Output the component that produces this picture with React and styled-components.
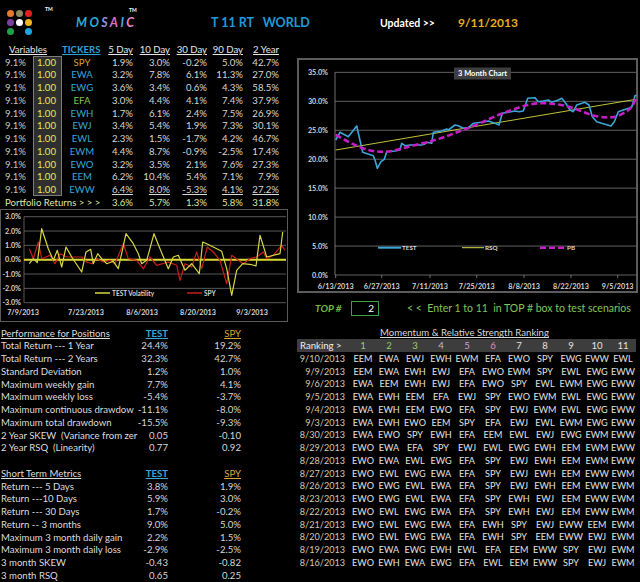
import React from 'react';
import styled, { createGlobalStyle } from 'styled-components';

const GlobalStyle = createGlobalStyle`
  html, body { margin: 0; padding: 0; background: #000; }
  body { font-family: Lato, "Liberation Sans", sans-serif; color: #d8d8d8; }
`;

const BLUE = '#3aa6d6';
const GOLD = '#dba632';
const GREEN = '#86c45a';

const variables = [
  ['SPY', '1.9%', '3.0%', '-0.2%', '5.0%', '42.7%'],
  ['EWA', '3.2%', '7.8%', '6.1%', '11.3%', '27.0%'],
  ['EWG', '3.6%', '3.4%', '0.6%', '4.3%', '58.5%'],
  ['EFA', '3.0%', '4.4%', '4.1%', '7.4%', '37.9%'],
  ['EWH', '1.7%', '6.1%', '2.4%', '7.5%', '26.9%'],
  ['EWJ', '3.4%', '5.4%', '1.9%', '7.3%', '30.1%'],
  ['EWL', '2.3%', '1.5%', '-1.7%', '4.2%', '46.7%'],
  ['EWM', '4.4%', '8.7%', '-0.9%', '-2.5%', '17.4%'],
  ['EWO', '3.2%', '3.5%', '2.1%', '7.6%', '27.3%'],
  ['EEM', '6.2%', '10.4%', '5.4%', '7.1%', '7.9%'],
  ['EWW', '6.4%', '8.0%', '-5.3%', '4.1%', '27.2%'],
];

const performance = [
  ['Total Return --- 1 Year', '24.4%', '19.2%'],
  ['Total Return --- 2 Years', '32.3%', '42.7%'],
  ['Standard Deviation', '1.2%', '1.0%'],
  ['Maximum weekly gain', '7.7%', '4.1%'],
  ['Maximum weekly loss', '-5.4%', '-3.7%'],
  ['Maximum continuous drawdow', '-11.1%', '-8.0%'],
  ['Maximum total drawdown', '-15.5%', '-9.3%'],
  ['2 Year SKEW  (Variance from zer', '0.05', '-0.10'],
  ['2 Year RSQ  (Linearity)', '0.77', '0.92'],
];

const shortTerm = [
  ['Return --- 5 Days', '3.8%', '1.9%'],
  ['Return ---10 Days', '5.9%', '3.0%'],
  ['Return --- 30 Days', '1.7%', '-0.2%'],
  ['Return -- 3 months', '9.0%', '5.0%'],
  ['Maximum 3 month daily gain', '2.2%', '1.5%'],
  ['Maximum 3 month daily loss', '-2.9%', '-2.5%'],
  ['3 month SKEW', '-0.43', '-0.82'],
  ['3 month RSQ', '0.65', '0.25'],
];

const ranking = `9/10/2013 EEM EWA EWJ EWH EWM EFA EWO SPY EWG EWW EWL
9/9/2013 EEM EWA EWH EWJ EFA EWO EWM SPY EWL EWG EWW
9/6/2013 EWA EEM EWH EWJ EFA EWO SPY EWL EWM EWG EWW
9/5/2013 EWA EWH EEM EFA EWJ SPY EWO EWM EWL EWG EWW
9/4/2013 EWA EWH EEM EWO EFA SPY EWJ EWM EWL EWG EWW
9/3/2013 EWA EWH EWO EEM SPY EFA EWJ EWL EWM EWG EWW
8/30/2013 EWA EWO SPY EWH EFA EEM EWL EWJ EWG EWM EWW
8/29/2013 EWO EWA EFA SPY EWJ EWL EWG EWH EEM EWM EWW
8/28/2013 EWO EWA EWL EWG EFA SPY EWJ EWH EEM EWM EWW
8/27/2013 EWO EWL EWG EWA EFA SPY EWJ EWH EEM EWW EWM
8/26/2013 EWO EWG EWL EWA EFA SPY EWJ EWH EEM EWW EWM
8/23/2013 EWO EWG EWL EWA EFA SPY EWH EWJ EEM EWW EWM
8/22/2013 EWO EWL EWG EWA EFA SPY EWH EWJ EEM EWW EWM
8/21/2013 EWO EWL EWG EWA EFA EWH SPY EWJ EWW EEM EWM
8/20/2013 EWO EWL EWG EWA EFA EWH SPY EEM EWW EWJ EWM
8/19/2013 EWO EWA EWG EWH EWL EFA EEM EWW SPY EWJ EWM
8/16/2013 EWO EWH EWA EWG EFA EWL EEM EWW SPY EWJ EWM`
  .split('\n')
  .map((l) => l.split(' '));

const rankColors = ['#8fd060', '#8fd060', '#9ccf6c', '#c4b4dc', '#d49ccc', '#e48cbc'];

const tickerColor = (t) => (t === 'SPY' ? GOLD : t === 'EFA' ? GREEN : BLUE);

// chart points are read off the screenshot at 3x, mapped back here
const mapPts = (arr, ox, oy) => arr.map(([x, y]) => [+(x / 3 + ox).toFixed(1), +(y / 3 + oy).toFixed(1)]);
const line = (pts) => pts.map((p) => p.join(',')).join(' ');
const smooth = (pts) => {
  let d = `M${pts[0]}`;
  for (let i = 0; i < pts.length - 1; i++) {
    const p0 = pts[i - 1] || pts[i];
    const p1 = pts[i];
    const p2 = pts[i + 1];
    const p3 = pts[i + 2] || p2;
    const c1 = [(p1[0] + (p2[0] - p0[0]) / 6).toFixed(1), (p1[1] + (p2[1] - p0[1]) / 6).toFixed(1)];
    const c2 = [(p2[0] - (p3[0] - p1[0]) / 6).toFixed(1), (p2[1] - (p3[1] - p1[1]) / 6).toFixed(1)];
    d += ` C${c1} ${c2} ${p2}`;
  }
  return d;
};

const testLine = mapPts([
  [122, 255], [135, 232], [160, 245], [185, 213], [203, 292], [235, 302], [240, 315], [247, 340],
  [258, 320], [268, 313], [275, 290], [300, 288], [315, 285], [320, 265], [330, 272], [345, 270],
  [380, 270], [388, 268], [395, 262], [410, 265], [415, 232], [440, 228], [455, 222], [460, 225],
  [480, 210], [490, 212], [505, 220], [520, 218], [535, 205], [560, 202], [580, 198], [600, 205],
  [612, 210], [622, 175], [640, 172], [660, 168], [672, 170], [685, 168], [698, 130], [720, 128],
  [730, 140], [745, 138], [760, 135], [770, 142], [790, 135], [800, 130], [812, 145], [825, 165],
  [835, 170], [845, 150], [870, 142], [882, 150], [892, 185], [905, 200], [920, 205], [948, 213],
  [958, 200], [970, 170], [985, 165], [1010, 157], [1020, 122], [1025, 120],
], -2, -3);

const pbLine = mapPts([
  [122, 240], [150, 255], [180, 270], [220, 285], [255, 290], [290, 288], [330, 278], [370, 268],
  [410, 258], [450, 245], [490, 230], [530, 215], [570, 198], [610, 180], [650, 165], [690, 152],
  [730, 145], [770, 146], [810, 152], [850, 165], [890, 180], [930, 187], [960, 185], [990, 172],
  [1010, 155], [1025, 125],
], -2, -3);

const volLine = mapPts([
  [88, 185], [100, 170], [112, 182], [125, 80], [145, 140], [160, 175], [172, 145], [185, 195],
  [198, 135], [215, 165], [245, 210], [258, 150], [272, 142], [280, 185], [293, 155], [305, 170],
  [320, 185], [340, 178], [355, 200], [378, 95], [400, 125], [415, 155], [425, 185], [440, 175],
  [462, 95], [480, 140], [505, 200], [520, 165], [535, 160], [555, 205], [575, 185], [598, 215],
  [608, 120], [620, 125], [640, 135], [665, 148], [680, 200], [695, 280], [710, 205], [728, 185],
  [755, 188], [768, 192], [780, 100], [800, 165], [840, 155], [848, 90],
], 0, -7);

const spyLine = mapPts([
  [88, 140], [100, 170], [115, 120], [125, 170], [150, 160], [165, 185], [180, 155], [200, 165],
  [215, 165], [245, 165], [260, 180], [275, 185], [290, 170], [310, 180], [330, 175], [345, 185],
  [370, 125], [385, 170], [410, 175], [430, 200], [450, 165], [470, 190], [505, 180], [530, 190],
  [540, 235], [555, 185], [575, 195], [590, 150], [605, 200], [622, 135], [640, 150], [660, 175],
  [680, 245], [695, 160], [715, 175], [730, 185], [750, 170], [770, 165], [790, 150], [800, 170],
  [820, 160], [845, 130], [855, 145],
], 0, -7);

const Page = styled.div`
  width: 640px;
  height: 582px;
  overflow: hidden;
  background: #000;
  display: grid;
  grid-template-columns: 297px 343px;
  grid-template-rows: 43px 1fr;
`;

const Header = styled.header`
  grid-column: 1 / 3;
  display: grid;
  grid-template-columns: 45px 31px 135px 169px 78px 1fr;
  align-items: center;
  font-weight: 700;
`;

const Dots = styled.div`
  display: grid;
  grid-template-columns: repeat(3, 7px);
  grid-auto-rows: 7px;
  gap: 2px;
  margin: 2px 0 0 7px;
`;

const Dot = styled.span`
  border-radius: 50%;
  background: ${(p) => p.$c};
`;

const Tm = styled.sup`
  align-self: start;
  margin-top: 6px;
  font-size: 5px;
  color: #fff;
`;

const Brand = styled.div`
  position: relative;
  font-size: 12.5px;
  font-style: italic;
  letter-spacing: 2.4px;
  margin-top: 2px;
`;

const BrandTm = styled.span`
  position: absolute;
  left: 53px;
  top: -8px;
  font-size: 5px;
  font-style: normal;
  letter-spacing: 0;
  color: #fff;
`;

const Letter = styled.span`
  color: ${(p) => p.$c};
`;

const Title = styled.div`
  color: #1f9ad8;
  font-size: 12.5px;
  white-space: pre;
  margin-top: 2px;
`;

const Updated = styled.div`
  color: #fff;
  font-size: 10.5px;
  margin-top: 2px;
`;

const DateText = styled.div`
  color: #e8b020;
  font-size: 12px;
  margin-top: 2px;
`;

const Column = styled.div`
  display: flex;
  flex-direction: column;
  font-size: 9.6px;
`;

const VarGrid = styled.div`
  display: grid;
  grid-template-columns: 28px 5px 29px 40px 33px 37px 37px 36px 36px;
  grid-auto-rows: 12.75px;
  align-items: center;
  width: 281px;
`;

const Cell = styled.div`
  text-align: ${(p) => p.$align || 'right'};
  padding-right: ${(p) => (p.$align === 'center' ? 0 : 2)}px;
  white-space: nowrap;
  color: ${(p) => p.$color || '#d6d6d6'};
  text-decoration: ${(p) => (p.$under ? 'underline' : 'none')};
  font-weight: ${(p) => (p.$bold ? 700 : 400)};
`;

const HeadLabel = styled.div`
  grid-column: ${(p) => p.$span || 'auto'};
  text-align: ${(p) => p.$align || 'right'};
  padding: 0 2px 0 ${(p) => p.$pl || 0}px;
  text-decoration: underline;
  color: ${(p) => p.$color || '#e6e6e6'};
  font-weight: ${(p) => (p.$bold ? 700 : 400)};
  white-space: nowrap;
`;

const WeightBox = styled.div`
  grid-column: 3;
  align-self: stretch;
  display: flex;
  align-items: center;
  justify-content: flex-end;
  padding-right: 5px;
  background: #2f2f2f;
  border-left: 1px solid #7c7c7c;
  border-right: 1px solid #7c7c7c;
  border-top: ${(p) => (p.$first ? '1px solid #7c7c7c' : 'none')};
  border-bottom: ${(p) => (p.$last ? '1px solid #7c7c7c' : 'none')};
  color: #e8e85c;
`;

const PortfolioLabel = styled.div`
  grid-column: 1 / 5;
  padding-left: 5px;
  color: #dfe6a4;
  white-space: pre;
`;

const ChartFrame = styled.svg`
  display: block;
  font-family: Lato, "Liberation Sans", sans-serif;
  text {
    fill: #d4d4d4;
    font-size: 7.2px;
    font-weight: 700;
  }
`;

const MetricGrid = styled.div`
  display: grid;
  grid-template-columns: 137px 33px 73px;
  grid-auto-rows: 12.75px;
  align-items: center;
  margin-top: ${(p) => p.$mt || 0}px;
`;

const MetricLabel = styled.div`
  padding-left: 1px;
  white-space: pre;
  color: #dcdcdc;
  text-decoration: ${(p) => (p.$under ? 'underline' : 'none')};
`;

const Spacer = styled.div`
  height: ${(p) => p.$h}px;
`;

const TopBar = styled.div`
  height: 30px;
  display: grid;
  grid-template-columns: 18px 36px 28px 28px 1fr;
  align-items: center;
  color: ${GREEN};
  font-size: 10.5px;
`;

const TopLabel = styled.div`
  grid-column: 2;
  font-style: italic;
  font-weight: 700;
  color: #6fbf3c;
  font-size: 10px;
`;

const TopBox = styled.div`
  height: 15px;
  border: 1px solid #3aa040;
  box-sizing: border-box;
  display: flex;
  align-items: center;
  justify-content: flex-end;
  padding-right: 4px;
  color: #fff;
  font-size: 10px;
`;

const TopHint = styled.div`
  grid-column: 5;
  white-space: pre;
  color: #86c35a;
`;

const RankGrid = styled.div`
  display: grid;
  grid-template-columns: 48px 5px repeat(11, 26px);
  grid-auto-rows: 12.75px;
  align-items: center;
  margin-top: 3.5px;
  font-size: 9.1px;
`;

const RankTitle = styled.div`
  grid-column: 1 / -1;
  text-align: center;
  padding-right: 4px;
  text-decoration: underline;
  color: #d8d8d8;
  font-size: 9.6px;
`;

const RankHead = styled.div`
  grid-column: 1 / -1;
  display: grid;
  grid-template-columns: subgrid;
  align-self: stretch;
  align-items: center;
  background: #3d3d3d;
  font-size: 9.6px;
`;

const RankCell = styled.div`
  grid-column: ${(p) => p.$span || 'auto'};
  text-align: ${(p) => p.$align || 'center'};
  padding-left: ${(p) => p.$pl || 0}px;
  color: ${(p) => p.$color || '#e2e2e2'};
  white-space: nowrap;
`;

const SmallChart = () => {
  const ys = [3, 2, 1, 0, -1, -2, -3];
  const y = (v) => 50.7 - v * 14.33;
  const dates = [['7/9/2013', 23], ['7/23/2013', 86], ['8/6/2013', 142], ['8/20/2013', 198], ['9/3/2013', 252]];
  return (
    <ChartFrame width="288" height="113" viewBox="0 0 288 113">
      <rect x="0.5" y="0.5" width="287" height="112" fill="#000" stroke="#5a5a5a" />
      {ys.map((v) => (
        <g key={v}>
          <line x1="24" x2="286" y1={y(v)} y2={y(v)} stroke="#6e6e6e" strokeWidth="0.8" />
          <text x="21" y={y(v) + 2.5} textAnchor="end">{v.toFixed(1)}%</text>
        </g>
      ))}
      <line x1="24" x2="24" y1={y(3)} y2={y(-3)} stroke="#6e6e6e" strokeWidth="0.8" />
      <line x1="24" x2="286" y1={y(0)} y2={y(0)} stroke="#d8d830" strokeWidth="2" />
      {dates.map(([d, x]) => (
        <text key={d} x={x} y="106" textAnchor="middle">{d}</text>
      ))}
      <polyline points={line(spyLine)} fill="none" stroke="#c81e1e" strokeWidth="1.2" strokeLinejoin="round" />
      <polyline points={line(volLine)} fill="none" stroke="#d6d640" strokeWidth="1.2" strokeLinejoin="round" />
      <line x1="95" x2="110" y1="84" y2="84" stroke="#d6d640" strokeWidth="1.5" />
      <text x="112" y="86.5" style={{ fontSize: '6.5px' }}>TEST Volatility</text>
      <line x1="187" x2="202" y1="84" y2="84" stroke="#c81e1e" strokeWidth="1.5" />
      <text x="204" y="86.5" style={{ fontSize: '6.5px' }}>SPY</text>
    </ChartFrame>
  );
};

const BigChart = () => {
  const ys = [35, 30, 25, 20, 15, 10, 5, 0];
  const y = (v) => 217 - v * 5.79;
  const dates = [
    ['6/13/2013', 38.7], ['6/27/2013', 84.7], ['7/11/2013', 133], ['7/25/2013', 179.7],
    ['8/8/2013', 227], ['8/22/2013', 274], ['9/5/2013', 320.7],
  ];
  return (
    <ChartFrame width="341" height="235" viewBox="0 0 341 235">
      <rect x="1" y="1" width="339" height="233" fill="#000" stroke="#5c5c5c" strokeWidth="2" />
      {ys.map((v) => (
        <g key={v}>
          <line x1="38" x2="339" y1={y(v)} y2={y(v)} stroke="#7a7a7a" strokeWidth="0.8" />
          <text x="31" y={y(v) + 2.5} textAnchor="end">{v.toFixed(1)}%</text>
        </g>
      ))}
      <line x1="38" x2="38" y1={y(35)} y2={y(0)} stroke="#8a8a8a" strokeWidth="0.8" />
      {dates.map(([d, x]) => (
        <g key={d}>
          <line x1={x} x2={x} y1="217" y2="220" stroke="#8a8a8a" strokeWidth="0.8" />
          <text x={x} y="231" textAnchor="middle">{d}</text>
        </g>
      ))}
      <rect x="157" y="9.5" width="57" height="12" fill="#3e3e3e" />
      <text x="185.5" y="18" textAnchor="middle" style={{ fill: '#fff', fontSize: '7.5px' }}>3  Month Chart</text>
      <line x1="38.7" y1="92" x2="339" y2="41.3" stroke="#d8d840" strokeWidth="0.9" />
      <polyline points={line(testLine)} fill="none" stroke={BLUE} strokeWidth="1.6" strokeLinejoin="round" />
      <path d={smooth(pbLine)} fill="none" stroke="#c41fc4" strokeWidth="2.6" strokeDasharray="6 3" />
      <line x1="81" x2="104" y1="189.7" y2="189.7" stroke={BLUE} strokeWidth="2" />
      <text x="105" y="192.2" style={{ fontSize: '6.3px' }}>TEST</text>
      <line x1="165" x2="187" y1="189.7" y2="189.7" stroke="#d8d840" strokeWidth="1" />
      <text x="188" y="192.2" style={{ fontSize: '6.3px' }}>RSQ</text>
      <line x1="243" x2="268" y1="189.7" y2="189.7" stroke="#c41fc4" strokeWidth="2.6" strokeDasharray="6 3" />
      <text x="270" y="192.2" style={{ fontSize: '6.3px' }}>PB</text>
    </ChartFrame>
  );
};

const dotColors = ['#e57a2c', '#8c8a5e', '#e11f1f', '#7d3fa0', '#ffffff', '#f2b51e', '#1fa04a', 'transparent', '#1ea3e3'];
const mosaic = [['M', '#2fa8dc'], ['O', '#2fa8dc'], ['S', '#8f8ee0'], ['A', '#e06fc0'], ['I', '#4aa6e4'], ['C', '#e487c6']];

export default function App() {
  return (
    <>
      <GlobalStyle />
      <Page>
        <Header>
          <Dots>
            {dotColors.map((c, i) => <Dot key={i} $c={c} />)}
          </Dots>
          <Tm>TM</Tm>
          <Brand>
            {mosaic.map(([l, c]) => <Letter key={l} $c={c}>{l}</Letter>)}
            <BrandTm>TM</BrandTm>
          </Brand>
          <Title>{'T 11 RT   WORLD'}</Title>
          <Updated>{'Updated >>'}</Updated>
          <DateText>9/11/2013</DateText>
        </Header>

        <Column>
          <VarGrid>
            <HeadLabel $span="1 / 4" $align="left" $pl={9}>Variables</HeadLabel>
            <HeadLabel $align="center" $color="#2f9fd8" $bold>TICKERS</HeadLabel>
            <HeadLabel>5 Day</HeadLabel>
            <HeadLabel>10 Day</HeadLabel>
            <HeadLabel>30 Day</HeadLabel>
            <HeadLabel>90 Day</HeadLabel>
            <HeadLabel>2 Year</HeadLabel>
            {variables.map(([t, ...vals], i) => (
              <React.Fragment key={t}>
                <Cell $color="#c6c6c6">9.1%</Cell>
                <WeightBox $first={i === 0} $last={i === variables.length - 1}>1.00</WeightBox>
                <Cell $align="center" $color={tickerColor(t)}>{t}</Cell>
                {vals.map((v, j) => (
                  <Cell key={j} $under={i === variables.length - 1}>{v}</Cell>
                ))}
              </React.Fragment>
            ))}
            <PortfolioLabel>{'Portfolio Returns > > >'}</PortfolioLabel>
            {['3.6%', '5.7%', '1.3%', '5.8%', '31.8%'].map((v) => (
              <Cell key={v} $color="#dfe6a4">{v}</Cell>
            ))}
          </VarGrid>

          <SmallChart />

          <MetricGrid $mt={5}>
            <MetricLabel $under>Performance for Positions</MetricLabel>
            <Cell $color={BLUE} $under $bold>TEST</Cell>
            <Cell $color={GOLD} $under>SPY</Cell>
            {performance.map(([l, a, b]) => (
              <React.Fragment key={l}>
                <MetricLabel>{l}</MetricLabel>
                <Cell>{a}</Cell>
                <Cell>{b}</Cell>
              </React.Fragment>
            ))}
          </MetricGrid>
          <Spacer $h={12.75} />
          <MetricGrid>
            <MetricLabel $under>Short Term Metrics</MetricLabel>
            <Cell $color={BLUE} $under $bold>TEST</Cell>
            <Cell $color={GOLD} $under>SPY</Cell>
            {shortTerm.map(([l, a, b]) => (
              <React.Fragment key={l}>
                <MetricLabel>{l}</MetricLabel>
                <Cell>{a}</Cell>
                <Cell>{b}</Cell>
              </React.Fragment>
            ))}
          </MetricGrid>
        </Column>

        <Column>
          <Spacer $h={15} />
          <BigChart />
          <TopBar>
            <TopLabel>TOP #</TopLabel>
            <TopBox>2</TopBox>
            <TopHint>{'< <  Enter 1 to 11  in TOP # box to test scenarios'}</TopHint>
          </TopBar>
          <RankGrid>
            <RankTitle>Momentum &amp; Relative Strength Ranking</RankTitle>
            <RankHead>
              <RankCell $align="left" $pl={3} $span="1 / 3" $color="#eee">Ranking &gt;</RankCell>
              {Array.from({ length: 11 }, (_, i) => (
                <RankCell key={i} $color={rankColors[i] || '#e2e2e2'}>{i + 1}</RankCell>
              ))}
            </RankHead>
            {ranking.map(([d, ...ts]) => (
              <React.Fragment key={d}>
                <RankCell $align="right" $color="#d8c8ae">{d}</RankCell>
                <span />
                {ts.map((t, j) => <RankCell key={j}>{t}</RankCell>)}
              </React.Fragment>
            ))}
          </RankGrid>
        </Column>
      </Page>
    </>
  );
}
